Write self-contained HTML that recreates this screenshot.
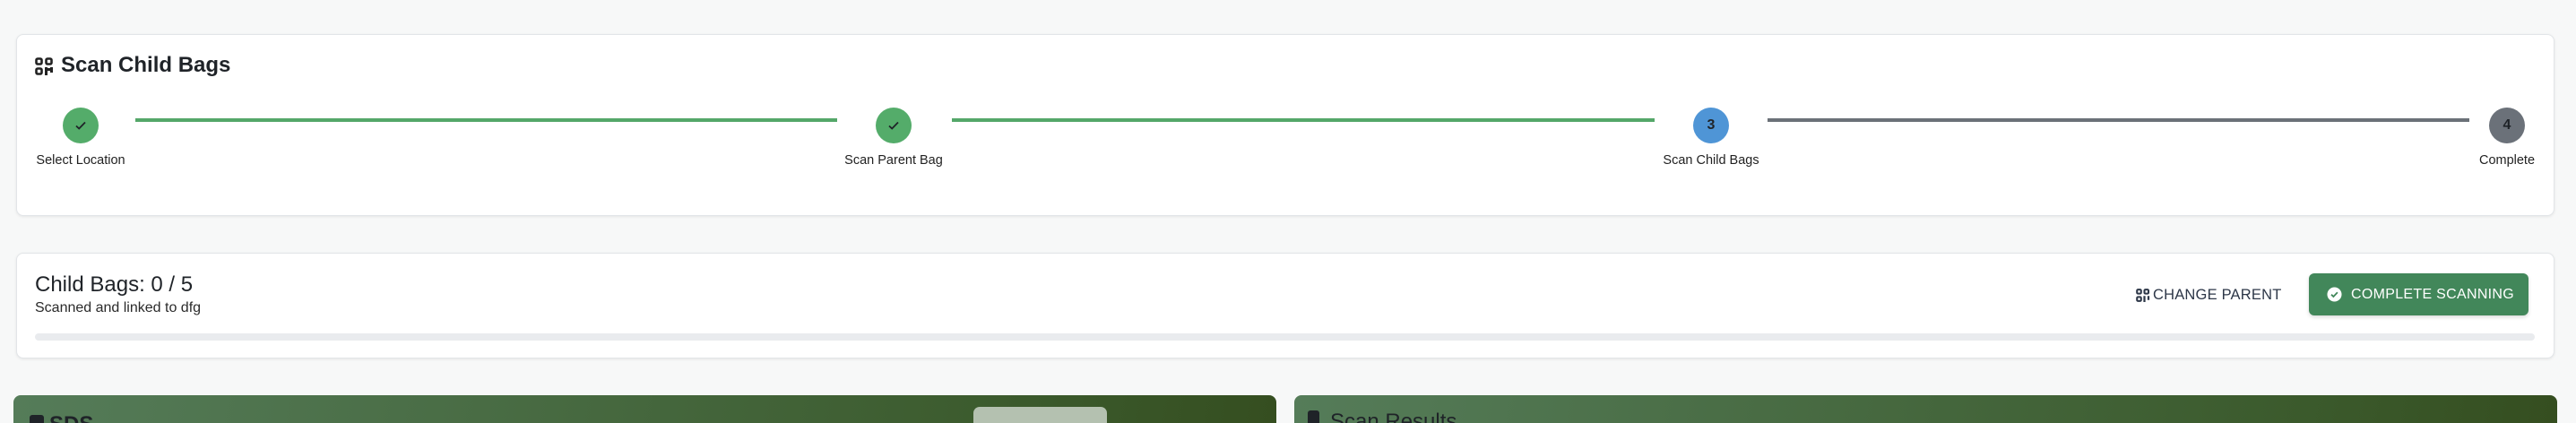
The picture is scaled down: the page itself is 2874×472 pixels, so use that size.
<!DOCTYPE html>
<html><head><meta charset="utf-8"><style>
*{box-sizing:border-box;margin:0;padding:0}
html{width:2874px;height:472px;overflow:hidden}
body{width:2874px;height:472px;background:#f7f8f8;font-family:"Liberation Sans",sans-serif;position:relative;overflow:hidden;color:#1f2328}
.card{position:absolute;background:#fff;border:1px solid #e2e5e8;border-radius:8px;box-shadow:0 1px 3px rgba(0,0,0,.08)}
.abs{position:absolute}
.circ{position:absolute;width:40px;height:40px;border-radius:50%;top:120px;display:flex;align-items:center;justify-content:center;font-size:16px;font-weight:bold;color:#1f2328}
.line{position:absolute;top:132px;height:4px}
.lbl{position:absolute;top:171px;font-size:14.5px;color:#222;white-space:nowrap;transform:translateX(-50%)}
.panel{position:absolute;top:441px;height:31px;border-radius:8px 8px 0 0;background:linear-gradient(100deg,#557c59,#3b5a2c 80%,#354e20);overflow:hidden}
.clip{position:absolute;left:0;top:0;width:2874px;height:472px;overflow:hidden}
</style></head><body><div class="clip">
<div class="card" style="left:18px;top:38px;width:2832px;height:203px"></div>
<svg class="abs" style="left:39px;top:64px" width="21" height="20" viewBox="0 0 21 20"><g fill="none" stroke="#222" stroke-width="2.6"><rect x="1.5" y="1.5" width="6" height="6" rx="1.5"/><rect x="12.5" y="1.5" width="6" height="6" rx="1.5"/><rect x="1.5" y="12.5" width="6" height="6" rx="1.5"/></g><rect x="11" y="11" width="3" height="9" fill="#222"/><rect x="14" y="12" width="3" height="3" fill="#222"/><rect x="17" y="11" width="3" height="6" fill="#222"/></svg>
<div class="abs" style="left:68px;top:59px;font-size:24px;font-weight:bold;color:#1f2328">Scan Child Bags</div>

<div class="line" style="left:151px;width:783px;background:#54a769"></div>
<div class="line" style="left:1062px;width:784px;background:#54a769"></div>
<div class="line" style="left:1972px;width:783px;background:#6b7178"></div>
<div class="circ" style="left:70px;background:#54ac6a"><svg width="16" height="16" viewBox="0 0 16 16"><path d="M3 8.5l3.2 3L13 4.5" fill="none" stroke="#1f2328" stroke-width="1.8"/></svg></div>
<div class="circ" style="left:977px;background:#54ac6a"><svg width="16" height="16" viewBox="0 0 16 16"><path d="M3 8.5l3.2 3L13 4.5" fill="none" stroke="#1f2328" stroke-width="1.8"/></svg></div>
<div class="circ" style="left:1889px;background:#4f95d6">3</div>
<div class="circ" style="left:2777px;background:#6b7179">4</div>
<div class="lbl" style="left:90px">Select Location</div>
<div class="lbl" style="left:997px">Scan Parent Bag</div>
<div class="lbl" style="left:1909px">Scan Child Bags</div>
<div class="lbl" style="left:2797px">Complete</div>

<div class="card" style="left:18px;top:282px;width:2832px;height:118px"></div>
<div class="abs" style="left:39px;top:304px;font-size:24px;font-weight:500;color:#1f2328">Child Bags: 0 / 5</div>
<div class="abs" style="left:39px;top:335px;font-size:16px;color:#2a2a2a">Scanned and linked to dfg</div>
<div class="abs" style="left:39px;top:372px;width:2789px;height:8px;border-radius:4px;background:#e9ebee"></div>
<svg class="abs" style="left:2383px;top:322px" width="16" height="15" viewBox="0 0 21 20"><g fill="none" stroke="#2d3748" stroke-width="2.8"><rect x="1.5" y="1.5" width="6" height="6" rx="1.5"/><rect x="12.5" y="1.5" width="6" height="6" rx="1.5"/><rect x="1.5" y="12.5" width="6" height="6" rx="1.5"/></g><rect x="11" y="11" width="3" height="9" fill="#2d3748"/><rect x="17" y="11" width="3" height="6" fill="#2d3748"/></svg>
<div class="abs" style="left:2402px;top:320px;font-size:16.5px;color:#2d3748;letter-spacing:.2px">CHANGE PARENT</div>
<div class="abs" style="left:2576px;top:305px;width:245px;height:47px;border-radius:6px;background:#42875a;box-shadow:0 2px 4px rgba(0,0,0,.15);color:#fff;font-size:16px;letter-spacing:.3px;display:flex;align-items:center;padding-left:20px;white-space:nowrap">
<svg width="17" height="17" viewBox="0 0 18 18" style="margin-right:10px"><circle cx="9" cy="9" r="8.5" fill="#fff"/><path d="M5.3 9.2l2.5 2.4 4.8-5" fill="none" stroke="#42875a" stroke-width="1.9"/></svg>COMPLETE SCANNING</div>

<div class="panel" style="left:15px;width:1409px">
<div class="abs" style="left:1071px;top:13px;width:149px;height:30px;border-radius:7px;background:#b4c1b0"></div>
<div class="abs" style="left:18px;top:22px;width:16px;height:14px;background:#1f2328;border-radius:3px"></div>
<div class="abs" style="left:40px;top:19px;font-size:24px;font-weight:bold;color:#1f2328">SDS</div>
</div>
<div class="panel" style="left:1444px;width:1409px">
<div class="abs" style="left:15px;top:17px;width:13px;height:17px;background:#1f2328;border-radius:3px"></div>
<div class="abs" style="left:40px;top:16px;font-size:24px;color:#1f2328">Scan Results</div>
</div>
</div></body></html>
